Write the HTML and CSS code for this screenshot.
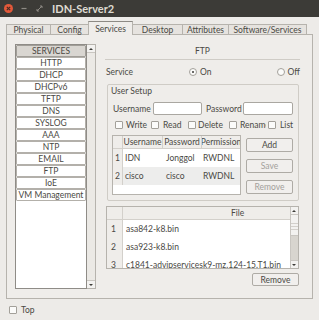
FILE: index.html
```html
<!DOCTYPE html>
<html lang="en">
<head>
<meta charset="UTF-8">
<title>IDN-Server2</title>
<link rel="stylesheet" href="styles.css">
</head>
<body>
<div class="titlebar">
    <svg class="win-close" width="9" height="9" viewBox="0 0 9 9">
        <circle cx="4.5" cy="4.5" r="4.5" fill="#e3593a"/>
        <path d="M2.8 2.8 L6.2 6.2 M6.2 2.8 L2.8 6.2" stroke="#4a2a22" stroke-width="1.2"/>
    </svg>
    <svg class="win-min" width="6" height="9" viewBox="0 0 6 9">
        <path d="M0.5 4.5 H5.5" stroke="#8d8a84" stroke-width="1.2"/>
    </svg>
    <svg class="win-max" width="7" height="9" viewBox="0 0 7 9">
        <path d="M1 7 L6 2 M4 2 H6 V4 M1 5 V7 H3" stroke="#8d8a84" stroke-width="1" fill="none"/>
    </svg>
    <span class="win-title">IDN-Server2</span>
</div>

<div class="tabs">
    <div class="tab w-phys">Physical</div>
    <div class="tab w-conf">Config</div>
    <div class="tab active w-serv">Services</div>
    <div class="tab w-desk">Desktop</div>
    <div class="tab w-attr">Attributes</div>
    <div class="tab w-soft last">Software/Services</div>
</div>

<div class="panel">
    <div class="side">
        <div class="svc-list">
            <div class="svc head">SERVICES</div>
            <div class="svc">HTTP</div>
            <div class="svc">DHCP</div>
            <div class="svc">DHCPv6</div>
            <div class="svc">TFTP</div>
            <div class="svc">DNS</div>
            <div class="svc">SYSLOG</div>
            <div class="svc">AAA</div>
            <div class="svc">NTP</div>
            <div class="svc">EMAIL</div>
            <div class="svc">FTP</div>
            <div class="svc">IoE</div>
            <div class="svc">VM Management</div>
        </div>
        <div class="vscroll">
            <div class="sb-arrow up"></div>
            <div class="sb-track"></div>
            <div class="sb-arrow down"></div>
        </div>
    </div>

    <div class="content">
        <div class="ftp-title">FTP</div>

        <div class="service-row">
            <span class="service-label">Service</span>
            <span class="radio-item on-item"><span class="radio checked"></span>On</span>
            <span class="radio-item off-item"><span class="radio"></span>Off</span>
        </div>

        <div class="group">
            <div class="legend">User Setup</div>
            <div class="user-row">
                <span class="lbl user-lbl">Username</span>
                <span class="input user-in"></span>
                <span class="lbl pass-lbl">Password</span>
                <span class="input pass-in"></span>
            </div>
            <div class="checks">
                <span class="chk w-write"><span class="box"></span><span class="chk-text">Write</span></span>
                <span class="chk w-read"><span class="box"></span><span class="chk-text">Read</span></span>
                <span class="chk w-delete"><span class="box"></span><span class="chk-text">Delete</span></span>
                <span class="chk w-rename"><span class="box"></span><span class="chk-text">Rename</span></span>
                <span class="chk w-list"><span class="box"></span><span class="chk-text">List</span></span>
            </div>
            <div class="user-area">
                <div class="user-table">
                    <div class="ut-row ut-head">
                        <span class="c-num"></span>
                        <span class="c-user hc">Username</span>
                        <span class="c-pass hc">Password</span>
                        <span class="c-perm hc">Permission</span>
                    </div>
                    <div class="ut-row">
                        <span class="c-num">1</span>
                        <span class="c-user">IDN</span>
                        <span class="c-pass">Jonggol</span>
                        <span class="c-perm">RWDNL</span>
                    </div>
                    <div class="ut-row alt">
                        <span class="c-num">2</span>
                        <span class="c-user">cisco</span>
                        <span class="c-pass">cisco</span>
                        <span class="c-perm">RWDNL</span>
                    </div>
                </div>
                <div class="btn-col">
                    <div class="btn">Add</div>
                    <div class="btn disabled">Save</div>
                    <div class="btn disabled">Remove</div>
                </div>
            </div>
        </div>

        <div class="files">
            <div class="files-grid">
                <div class="f-head">
                    <span class="f-num"></span>
                    <span class="f-name-head">File</span>
                </div>
                <div class="f-row">
                    <span class="f-num">1</span>
                    <span class="f-name">asa842-k8.bin</span>
                </div>
                <div class="f-row">
                    <span class="f-num">2</span>
                    <span class="f-name">asa923-k8.bin</span>
                </div>
                <div class="f-row">
                    <span class="f-num">3</span>
                    <span class="f-name">c1841-advipservicesk9-mz.124-15.T1.bin</span>
                </div>
            </div>
            <div class="fscroll">
                <div class="sb-arrow up"></div>
                <div class="sb-thumb"></div>
                <div class="sb-groove"></div>
                <div class="sb-arrow down"></div>
            </div>
        </div>

        <div class="remove-row">
            <div class="btn remove-btn">Remove</div>
        </div>
    </div>
</div>

<div class="footer">
    <span class="box"></span>
    <span>Top</span>
</div>
</body>
</html>
```

FILE: styles.css
```css
* {
    box-sizing: border-box;
}
body {
    margin: 0;
    width: 319px;
    height: 320px;
    overflow: hidden;
    background-color: #edebe8;
    font-family: Lato, "DejaVu Sans", sans-serif;
    font-size: 8.5px;
    color: #4a4944;
}

/* window title bar */
.titlebar {
    height: 17px;
    background-color: #3c3b37;
    display: flex;
    align-items: center;
    padding-left: 4px;
}
.win-close {
    display: block;
}
.win-min {
    display: block;
    margin-left: 8px;
}
.win-max {
    display: block;
    margin-left: 9px;
}
.win-title {
    margin-left: 9px;
    font-weight: bold;
    font-size: 11px;
    color: #dfdbd2;
}

/* tabs */
.tabs {
    height: 17px;
    display: flex;
    align-items: flex-end;
    padding-left: 6px;
}
.tab {
    height: 10px;
    border: 1px solid #b6b3ad;
    border-right: none;
    border-bottom: none;
    background-color: #e6e3df;
    display: flex;
    justify-content: center;
    align-items: center;
    line-height: 9px;
    padding-top: 1px;
    white-space: nowrap;
}
.tab.last {
    border-right: 1px solid #b6b3ad;
}
.tab.active {
    height: 14px;
    margin-bottom: -1px;
    padding-top: 2px;
    background-color: #efedea;
    border-top: 1px solid #8d8a85;
    border-right: 1px solid #b6b3ad;
    position: relative;
    z-index: 1;
}
.tab.active + .tab {
    border-left: none;
}
.w-phys { width: 44px; }
.w-conf { width: 38px; }
.w-serv { width: 45px; }
.w-desk { width: 49px; }
.w-attr { width: 46px; }
.w-soft { width: 79px; }

/* main panel */
.panel {
    margin-left: 6px;
    width: 307px;
    height: 265px;
    border: 1px solid #b6b3ad;
    background-color: #efedea;
    padding: 9px 0 0 8px;
    display: flex;
}
.side {
    display: flex;
    height: 245px;
}
.svc-list {
    width: 72px;
    height: 245px;
    background-color: white;
    border: 1px solid #8f8c87;
}
.svc {
    height: 12px;
    border: 1px solid #b3b0aa;
    border-radius: 1px;
    background-color: white;
    text-align: center;
    line-height: 10px;
    white-space: nowrap;
    overflow: hidden;
}
.svc.head {
    background-color: #d9d6d1;
    border-color: #a19e98;
}
.vscroll {
    width: 9px;
    height: 245px;
    border: 1px solid #b6b3ad;
    border-left: none;
    background-color: #ebe9e5;
    display: flex;
    flex-direction: column;
}
.sb-arrow {
    height: 8px;
    background-color: #f3f2f0;
    border-bottom: 1px solid #c9c6c1;
    position: relative;
}
.sb-arrow.down {
    border-bottom: none;
    border-top: 1px solid #c9c6c1;
}
.sb-arrow::after {
    content: "";
    position: absolute;
    left: 2px;
    top: 3px;
    border-left: 2px solid transparent;
    border-right: 2px solid transparent;
}
.sb-arrow.up::after {
    border-bottom: 2px solid #3c3b37;
}
.sb-arrow.down::after {
    border-top: 2px solid #3c3b37;
}
.sb-track {
    flex: 1;
}

/* right side */
.content {
    margin-left: 9px;
    width: 195px;
    display: flex;
    flex-direction: column;
}
.ftp-title {
    height: 16px;
    border-bottom: 1px solid #cfccc6;
    text-align: center;
    line-height: 14px;
}
.service-row {
    height: 23px;
    display: flex;
    align-items: center;
    padding-left: 1px;
}
.service-label {
    width: 89px;
}
.radio-item {
    display: flex;
    align-items: center;
}
.on-item {
    width: 94px;
}
.radio {
    width: 8px;
    height: 8px;
    border: 1px solid #a3a09a;
    border-radius: 50%;
    background-color: #fbfbfa;
    margin-right: 3px;
    position: relative;
}
.radio.checked::after {
    content: "";
    position: absolute;
    left: 2px;
    top: 2px;
    width: 2px;
    height: 2px;
    border-radius: 50%;
    background-color: #3c3b37;
}

.group {
    margin: 1px 1px 0 2px;
    height: 117px;
    border: 1px solid #cfccc6;
    border-radius: 2px;
}
.legend {
    height: 12px;
    line-height: 12px;
    padding-left: 3px;
}
.user-row {
    margin-top: 5px;
    height: 13px;
    display: flex;
    align-items: center;
    padding-left: 5px;
}
.lbl {
    display: block;
}
.user-lbl {
    width: 40px;
}
.pass-lbl {
    width: 37px;
    margin-left: 4px;
}
.input {
    display: block;
    height: 13px;
    background-color: white;
    border: 1px solid #aaa7a1;
    border-radius: 2px;
}
.user-in {
    width: 49px;
}
.pass-in {
    width: 50px;
}
.checks {
    margin-top: 5px;
    height: 10px;
    display: flex;
    align-items: center;
    padding-left: 7px;
}
.chk {
    display: flex;
    align-items: center;
    overflow: hidden;
    white-space: nowrap;
}
.box {
    display: block;
    flex: none;
    width: 8px;
    height: 8px;
    border: 1px solid #a3a09a;
    background-color: #fbfbfa;
    border-radius: 1px;
}
.chk-text {
    margin-left: 3px;
}
.w-write { width: 36px; }
.w-read { width: 37px; }
.w-delete { width: 41px; }
.w-rename { width: 39px; }
.w-list { width: 28px; }
.w-read .chk-text, .w-list .chk-text { margin-left: 4px; }
.w-delete .chk-text { margin-left: 2px; }
.w-rename .chk-text {
    width: 26px;
    overflow: hidden;
}

.user-area {
    margin-top: 5px;
    display: flex;
    padding-left: 4px;
}
.user-table {
    width: 129px;
    height: 60px;
    border: 1px solid #b6b3ad;
    background-color: white;
}
.ut-row {
    height: 18px;
    display: flex;
    align-items: center;
}
.ut-row.alt {
    background-color: #ededec;
}
.ut-head {
    height: 13px;
    background-color: #efedea;
    border-bottom: 1px solid #d3d0cb;
}
.ut-row span {
    height: 100%;
    display: flex;
    align-items: center;
    white-space: nowrap;
    overflow: hidden;
}
.c-num {
    width: 10px;
    justify-content: center;
    background-color: #efedea;
    border-right: 1px solid #d3d0cb;
}
.c-user {
    width: 40px;
    padding-left: 2px;
}
.c-pass {
    width: 39px;
    padding-left: 3px;
}
.c-perm {
    width: 38px;
    padding-left: 1px;
}
.ut-row span.hc {
    justify-content: center;
    padding-left: 0;
    border-right: 1px solid #d3d0cb;
}
.ut-row span.c-perm.hc {
    border-right: none;
}
.btn-col {
    margin-left: 5px;
    padding-top: 3px;
    display: flex;
    flex-direction: column;
    gap: 7px;
}
.btn {
    width: 47px;
    height: 14px;
    border: 1px solid #aeaba5;
    border-radius: 2px;
    background-color: #f1efed;
    text-align: center;
    line-height: 12px;
}
.btn.disabled {
    color: #a3a09b;
}

/* file list */
.files {
    margin-top: 5px;
    margin-left: 1px;
    width: 193px;
    height: 63px;
    border: 1px solid #b6b3ad;
    display: flex;
}
.files-grid {
    flex: 1;
    background-color: white;
    overflow: hidden;
}
.f-head {
    height: 13px;
    display: flex;
    background-color: #efedea;
    border-bottom: 1px solid #d3d0cb;
}
.f-row {
    height: 18px;
    display: flex;
}
.f-num {
    width: 16px;
    flex: none;
    background-color: #efedea;
    border-right: 1px solid #d3d0cb;
    padding-left: 4px;
    display: flex;
    align-items: center;
}
.f-name-head {
    padding-left: 108px;
    line-height: 12px;
}
.f-name {
    padding-left: 3px;
    white-space: nowrap;
    display: flex;
    align-items: center;
}
.fscroll {
    width: 8px;
    border-left: 1px solid #c9c6c1;
    background-color: #f3f2f0;
    display: flex;
    flex-direction: column;
}
.fscroll .sb-arrow::after {
    left: 1px;
}
.sb-thumb {
    height: 21px;
    background-image: repeating-linear-gradient(#f3f2f0 0, #f3f2f0 2px, #d3d0cb 2px, #d3d0cb 3px);
    background-size: 100% 9px;
    background-position: 0 6px;
    background-repeat: no-repeat;
    border-bottom: 1px solid #c9c6c1;
}
.sb-groove {
    flex: 1;
    background-color: #d8d5cf;
}
.remove-row {
    margin-top: 4px;
    display: flex;
    justify-content: flex-end;
    padding-right: 1px;
}
.remove-btn {
    height: 13px;
}

/* bottom checkbox */
.footer {
    height: 21px;
    display: flex;
    align-items: center;
    padding-left: 9px;
    gap: 4px;
}
```
